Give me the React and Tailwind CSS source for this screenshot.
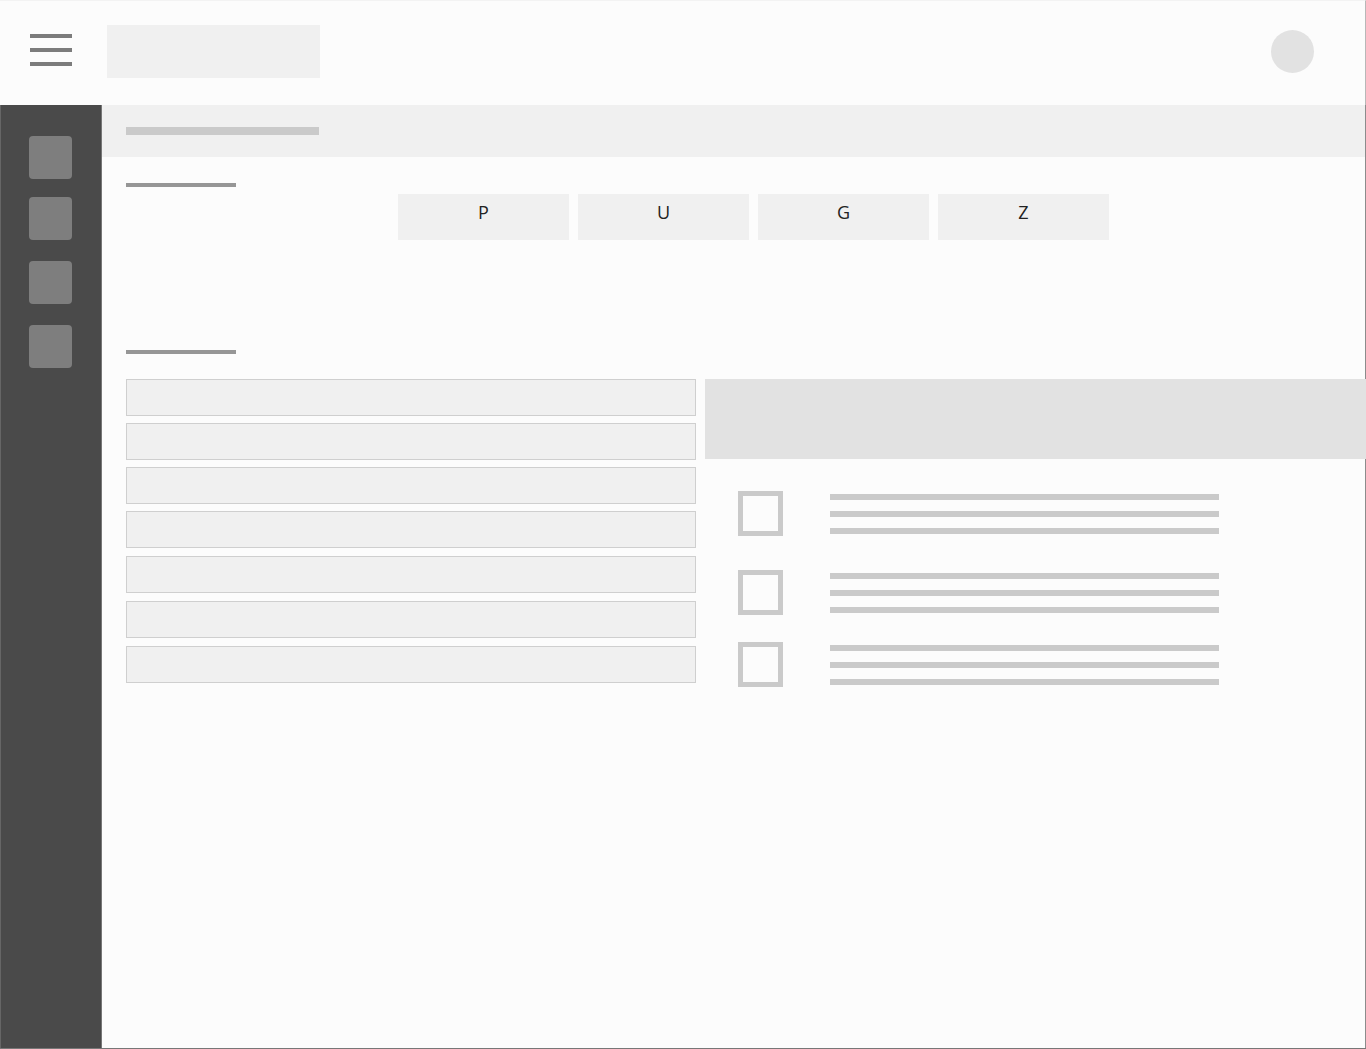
import React from "react";

const navItems = [
  { name: "Home", gap: "mt-0" },
  { name: "Library", gap: "mt-[18px]" },
  { name: "Reports", gap: "mt-[21px]" },
  { name: "Settings", gap: "mt-[21px]" },
];

const tiles = ["P", "U", "G", "Z"];

const rowGaps = ["mt-0", "mt-[7px]", "mt-[7px]", "mt-[7px]", "mt-2", "mt-2", "mt-2"];

const tasks = [
  { name: "First item", gap: "mt-8" },
  { name: "Second item", gap: "mt-[34px]" },
  { name: "Third item", gap: "mt-[27px]" },
];

function Header() {
  return (
    <header className="flex h-[105px] items-start border-r border-t border-r-[#b8b8b8] border-t-[#f3f3f3] pl-[30px] pr-[51px]">
      <button type="button" aria-label="Menu" className="mt-[33px] flex w-[42px] flex-col gap-[10px]">
        <span className="h-1 w-full bg-[#7c7c7c]" />
        <span className="h-1 w-full bg-[#7c7c7c]" />
        <span className="h-1 w-full bg-[#7c7c7c]" />
      </button>
      <div className="ml-[35px] mt-6 h-[53px] w-[213px] bg-[#f0f0f0]" />
      <button
        type="button"
        aria-label="Account"
        className="ml-auto mt-[29px] size-[43px] rounded-full bg-[#e2e2e2]"
      />
    </header>
  );
}

function Sidebar() {
  return (
    <nav className="flex w-[102px] shrink-0 flex-col border-x border-l-[#666666] border-r-[#777777] bg-[#4a4a4a] pl-7 pt-[31px]">
      {navItems.map((item) => (
        <button
          key={item.name}
          type="button"
          aria-label={item.name}
          className={`size-[43px] rounded bg-[#7e7e7e] ${item.gap}`}
        />
      ))}
    </nav>
  );
}

function Task({ name, gap }) {
  return (
    <li className={`flex items-center pl-[33px] pr-[147px] ${gap}`}>
      <input
        type="checkbox"
        aria-label={name}
        className="size-[45px] shrink-0 appearance-none border-[5px] border-[#cacaca] bg-[#fcfcfc] checked:bg-[#cacaca]"
      />
      <div className="ml-[47px] flex flex-1 flex-col gap-[11px]">
        <div className="h-1.5 bg-[#cacaca]" />
        <div className="h-1.5 bg-[#cacaca]" />
        <div className="h-1.5 bg-[#cacaca]" />
      </div>
    </li>
  );
}

export default function App() {
  return (
    <div className="flex min-h-screen flex-col border-b border-b-[#777777] bg-[#fcfcfc] font-['Open_Sans','Noto_Sans',sans-serif] text-[#222222]">
      <Header />
      <div className="flex flex-1 border-r border-r-[#8c8c8c]">
        <Sidebar />
        <main className="min-w-0 flex-1">
          <div className="h-[52px] bg-[#f0f0f0] pl-6 pt-[22px]">
            <div className="h-2 w-[193px] bg-[#cacaca]" />
          </div>
          <section className="pl-6 pt-[26px]">
            <div className="h-1 w-[110px] bg-[#969696]" />
            <div className="ml-[272px] mr-[256px] mt-[7px] grid grid-cols-4 gap-[9px]">
              {tiles.map((letter) => (
                <button
                  key={letter}
                  type="button"
                  className="flex h-[46px] justify-center bg-[#f0f0f0] pt-1 text-lg leading-7"
                >
                  {letter}
                </button>
              ))}
            </div>
          </section>
          <section className="pl-6 pt-[110px]">
            <div className="h-1 w-[110px] bg-[#969696]" />
            <div className="-mr-px mt-[25px] grid grid-cols-[570fr_661fr] gap-[9px]">
              <ul>
                {rowGaps.map((gap, i) => (
                  <li key={i} className={`h-[37px] border border-[#cfcfcf] bg-[#f0f0f0] ${gap}`} />
                ))}
              </ul>
              <div>
                <div className="h-20 bg-[#e2e2e2]" />
                <ul>
                  {tasks.map((task) => (
                    <Task key={task.name} {...task} />
                  ))}
                </ul>
              </div>
            </div>
          </section>
        </main>
      </div>
    </div>
  );
}
